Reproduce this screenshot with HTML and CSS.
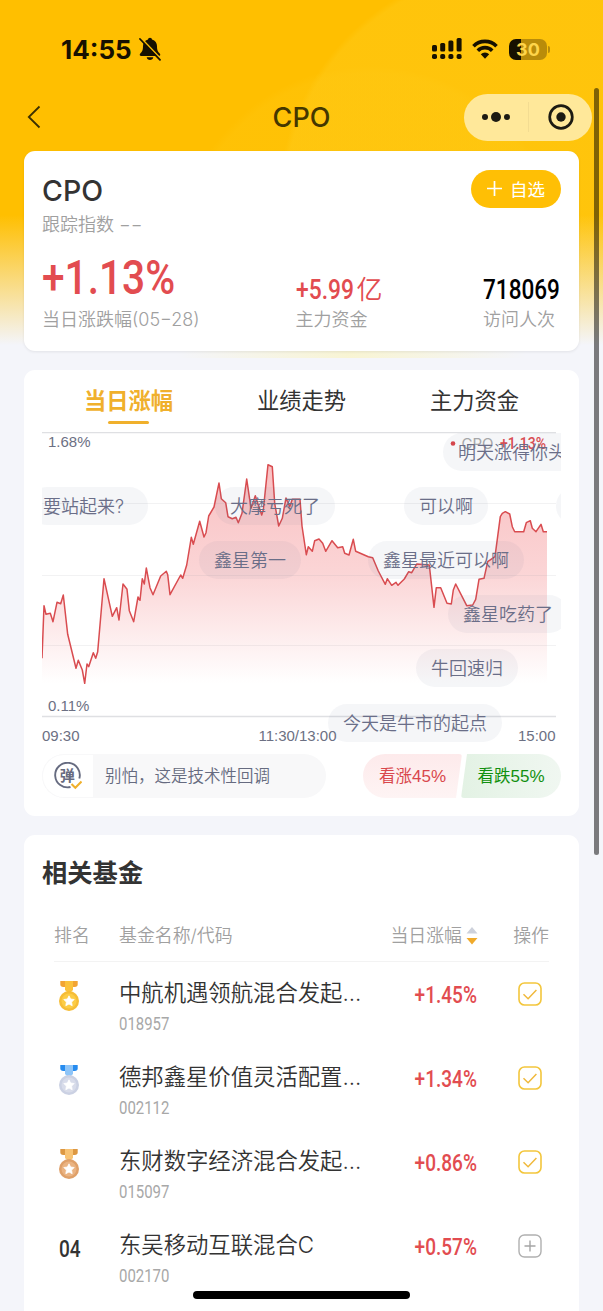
FILE: index.html
```html
<!DOCTYPE html>
<html lang="zh-CN">
<head>
    <meta charset="UTF-8">
    <meta name="viewport" content="width=device-width, initial-scale=1.0">
    <title>CPO</title>
    <link rel="stylesheet" href="styles.css">
</head>
<body>

    <svg width="0" height="0" class="defs">
        <symbol id="check" viewBox="0 0 24 24">
            <rect x="1" y="1" width="22" height="22" rx="5.5" fill="none" stroke="#f3c63c" stroke-width="1.6"/>
            <path d="M5.5 12.3l4.600 4.400 8.300-8.600" fill="none" stroke="#f0b93c" stroke-width="1.5"/>
        </symbol>
        <symbol id="plus" viewBox="0 0 24 24">
            <rect x="1" y="1" width="22" height="22" rx="5.5" fill="none" stroke="#b0b0b0" stroke-width="1.4"/>
            <path d="M6.5 12h11M12 6.5v11" fill="none" stroke="#a5a5a5" stroke-width="1.4"/>
        </symbol>
        <symbol id="star" viewBox="0 0 12 12">
            <path d="M6 .8l1.6 3.2 3.6.5-2.6 2.6.6 3.6L6 9l-3.200 1.700.6-3.600L.8 4.500l3.600-.5z" fill="#fff" stroke="#fff" stroke-width=".8" stroke-linejoin="round"/>
        </symbol>
    </svg>

    <header class="header">
        <div class="status-bar">
            <div class="status-left">
                <span class="time">14:55</span>
                <svg width="22" height="24" viewBox="0 0 22 24">
                    <path d="M11 .7c1.100 0 1.900.8 2 1.700 3.300.9 5 3.600 5 6.600 0 4.600 1 5.800 2.700 7.400 1.100 1.100.5 2.600-.9 2.600H2.200c-1.400 0-2-1.500-.9-2.600C3 14.800 4 13.600 4 9c0-3 1.700-5.700 5-6.600.1-.9.900-1.700 2-1.700zM7.700 20.300h6.600c-.3 1.700-1.600 2.700-3.300 2.700s-3-1-3.300-2.700z" fill="#171100"/>
                    <path d="M2.200 1.300l19.500 20.400" stroke="#ffc000" stroke-width="1.800"/>
                    <path d="M1 2l20 20.800" stroke="#171100" stroke-width="1.800" stroke-linecap="round"/>
                </svg>
            </div>
            <div class="status-right">
                <svg width="30" height="22" viewBox="0 0 30 22" fill="#171100">
                    <rect x="0" y="7" width="5" height="6.500" rx="1.500"/>
                    <rect x="8.200" y="5" width="5" height="8.500" rx="1.500"/>
                    <rect x="16.400" y="2.500" width="5" height="11" rx="1.500"/>
                    <rect x="24.600" y="0" width="5" height="13.500" rx="1.500"/>
                    <rect x="0" y="16" width="5" height="5" rx="1.800"/>
                    <rect x="8.200" y="16" width="5" height="5" rx="1.800"/>
                    <rect x="16.400" y="16" width="5" height="5" rx="1.800"/>
                    <rect x="24.600" y="16" width="5" height="5" rx="1.800"/>
                </svg>
                <svg class="wifi" width="26" height="20" viewBox="0 0 26 20">
                    <g fill="none" stroke="#171100" stroke-width="3.700">
                        <path d="M1.500 7.200a16.300 16.300 0 0 1 23 0"/>
                        <path d="M5.800 11.700a10.200 10.200 0 0 1 14.400 0"/>
                    </g>
                    <path d="M13 19.700l-4.200-4.400a6 6 0 0 1 8.400 0z" fill="#171100"/>
                </svg>
                <div class="battery"><span>30</span></div>
            </div>
        </div>
        <nav class="nav">
            <svg class="back" width="14" height="24" viewBox="0 0 14 24">
                <path d="M12.500 1.500L1.800 12l10.700 10.500" fill="none" stroke="#3c3000" stroke-width="1.800"/>
            </svg>
            <h1>CPO</h1>
            <div class="capsule">
                <svg width="30" height="12" viewBox="0 0 30 12" fill="#1c1a12">
                    <circle cx="4" cy="6" r="3"/><circle cx="15" cy="6" r="5"/><circle cx="26" cy="6" r="3"/>
                </svg>
                <i></i>
                <svg width="26" height="26" viewBox="0 0 26 26">
                    <circle cx="13" cy="13" r="11.300" fill="none" stroke="#1c1a12" stroke-width="2.700"/>
                    <circle cx="13" cy="13" r="4.700" fill="#1c1a12"/>
                </svg>
            </div>
        </nav>
    </header>

    <main>
        <section class="card summary">
            <div class="summary-top">
                <div>
                    <h2>CPO</h2>
                    <p class="label">跟踪指数 <span class="dash">−−</span></p>
                </div>
                <button class="add">
                    <svg width="15" height="15" viewBox="0 0 15 15"><path d="M7.500 0v15M0 7.500h15" stroke="#fff" stroke-width="1.700"/></svg>
                    自选
                </button>
            </div>
            <div class="stats">
                <div class="stat stat-main">
                    <div class="value up"><span class="din">+1.13%</span></div>
                    <p class="label">当日涨跌幅(05−28)</p>
                </div>
                <div class="stat stat-fund">
                    <div class="value up"><span class="din">+5.99</span><span class="unit">亿</span></div>
                    <p class="label">主力资金</p>
                </div>
                <div class="stat stat-visit">
                    <div class="value"><span class="din">718069</span></div>
                    <p class="label">访问人次</p>
                </div>
            </div>
        </section>

        <section class="card trend">
            <div class="tabs">
                <div class="tab active">当日涨幅</div>
                <div class="tab">业绩走势</div>
                <div class="tab">主力资金</div>
            </div>
            <div class="chart">
                <svg width="519" height="313" viewBox="42 432 519 313">
                    <defs>
                        <linearGradient id="fade" gradientUnits="userSpaceOnUse" x1="0" y1="465" x2="0" y2="683">
                            <stop offset="0" stop-color="#f9c0c2"/>
                            <stop offset=".5" stop-color="#fbd5d6"/>
                            <stop offset="1" stop-color="#ffffff"/>
                        </linearGradient>
                    </defs>
                    <path fill="url(#fade)" d="M42 658.300L44 605.700 46 614.300 50.300 613.300 53 621.700 57 602.300 60.700 603.700 63.300 595 67.700 634.300 76 668.300 78.300 660.300 82.300 670 84.700 683.300 87 664 88.700 666.700 93.300 652.700 95.700 658.300 97.700 651.700 104 578.700 112.300 616.300 116.700 607.700 119 620 123 584 127 589.300 129.300 610.700 133.700 621.700 138 597 140 600.300 142.300 578.700 144.300 584 146.300 568 150 587.700 153 594.700 160.700 576 166.300 571.300 167.700 574.700 170 594.700 180.700 575 182.700 578.300 186.700 565 191.300 537.300 193.300 544.300 199.700 521.300 204 537 206 532.700 208.700 516 214 507 219 483 221.300 498.700 225.700 502.700 228 516.700 232.300 518.700 236 517.300 238.300 522.700 242 513.300 246.700 479 251 508.300 255.300 495.700 261.700 515 263.300 510 268 464.700 272.300 466.700 274.700 503.300 278.700 526 282.300 518.300 286 498 289.700 506.700 292.300 499.300 300 499.300 302 526 306.300 554.700 308.300 546.700 312.300 551.300 314.700 540.700 319 539 322.700 543.300 325.700 551.300 332 540.700 337.700 547.700 342.700 546.700 344.700 553.300 349 555 353.300 539.300 355.700 551.300 368.300 556.700 372.700 557.700 378.300 571 385.300 584.300 387.300 578.700 391.700 585.300 396 582.300 398 585.300 404.300 579 408.700 571.700 411.700 572.700 416.700 564 429.300 565 431.700 586.700 434 607.300 436.300 587.700 440.700 587.700 447 603.300 451.300 604 453.300 590 455.700 584 466.700 605.700 472.700 605 475.700 599.300 479 579.300 484 578.300 487.700 561.700 495 556.700 500.300 516.700 502.300 513.300 505.300 511.700 509.700 514 512.300 526.700 514.700 531.700 523.700 531.700 526.300 522.700 530.300 520.700 532.300 528.300 536 531.700 541 524.300 543.300 531.700 547 531.700V690H42z"/>
                    <g stroke="#9a9aa5" stroke-opacity=".13">
                        <path d="M42 503.500H556M42 575.500H556M42 645.500H556"/>
                    </g>
                    <path d="M42 432.500H556M42 716.500H556" stroke="#dfe0e3" stroke-width="1.500"/>
                    <path fill="none" stroke="#d94c50" stroke-width="1.500" stroke-linejoin="round" d="M42 658.300L44 605.700 46 614.300 50.300 613.300 53 621.700 57 602.300 60.700 603.700 63.300 595 67.700 634.300 76 668.300 78.300 660.300 82.300 670 84.700 683.300 87 664 88.700 666.700 93.300 652.700 95.700 658.300 97.700 651.700 104 578.700 112.300 616.300 116.700 607.700 119 620 123 584 127 589.300 129.300 610.700 133.700 621.700 138 597 140 600.300 142.300 578.700 144.300 584 146.300 568 150 587.700 153 594.700 160.700 576 166.300 571.300 167.700 574.700 170 594.700 180.700 575 182.700 578.300 186.700 565 191.300 537.300 193.300 544.300 199.700 521.300 204 537 206 532.700 208.700 516 214 507 219 483 221.300 498.700 225.700 502.700 228 516.700 232.300 518.700 236 517.300 238.300 522.700 242 513.300 246.700 479 251 508.300 255.300 495.700 261.700 515 263.300 510 268 464.700 272.300 466.700 274.700 503.300 278.700 526 282.300 518.300 286 498 289.700 506.700 292.300 499.300 300 499.300 302 526 306.300 554.700 308.300 546.700 312.300 551.300 314.700 540.700 319 539 322.700 543.300 325.700 551.300 332 540.700 337.700 547.700 342.700 546.700 344.700 553.300 349 555 353.300 539.300 355.700 551.300 368.300 556.700 372.700 557.700 378.300 571 385.300 584.300 387.300 578.700 391.700 585.300 396 582.300 398 585.300 404.300 579 408.700 571.700 411.700 572.700 416.700 564 429.300 565 431.700 586.700 434 607.300 436.300 587.700 440.700 587.700 447 603.300 451.300 604 453.300 590 455.700 584 466.700 605.700 472.700 605 475.700 599.300 479 579.300 484 578.300 487.700 561.700 495 556.700 500.300 516.700 502.300 513.300 505.300 511.700 509.700 514 512.300 526.700 514.700 531.700 523.700 531.700 526.300 522.700 530.300 520.700 532.300 528.300 536 531.700 541 524.300 543.300 531.700 547 531.700"/>
                    <g class="axis">
                        <text x="48" y="447">1.68%</text>
                        <text x="48" y="711">0.11%</text>
                        <text x="42" y="741">09:30</text>
                        <text x="297.500" y="741" text-anchor="middle">11:30/13:00</text>
                        <text x="555.500" y="741" text-anchor="end">15:00</text>
                    </g>
                    <circle cx="453" cy="443.500" r="2.300" fill="#dd4449"/>
                    <text x="461.500" y="449" class="legend-name">CPO</text>
                    <text x="500" y="449" class="legend-value" textLength="46" lengthAdjust="spacingAndGlyphs">+1.13%</text>
                </svg>
                <!-- floating comments over the chart -->
                <div class="danmaku">
                    <span class="dm dm-1">明天涨得你头</span>
                    <span class="dm dm-2">要站起来?</span>
                    <span class="dm dm-3">大摩亏死了</span>
                    <span class="dm dm-4">可以啊</span>
                    <span class="dm dm-5"></span>
                    <span class="dm dm-6">鑫星第一</span>
                    <span class="dm dm-7">鑫星最近可以啊</span>
                    <span class="dm dm-8">鑫星吃药了</span>
                    <span class="dm dm-9">牛回速归</span>
                    <span class="dm dm-10">今天是牛市的起点</span>
                </div>
            </div>
            <div class="talk">
                <div class="talk-input">
                    <div class="talk-icon">
                        <svg width="28" height="28" viewBox="0 0 28 28">
                            <path d="M25.300 16.500A12.300 12.300 0 1 0 16.500 25" fill="none" stroke="#666b80" stroke-width="1.900"/>
                            <text x="13.300" y="18.500" text-anchor="middle">弹</text>
                            <path d="M17.500 22l3.800 3.800 6.200-6.300" fill="none" stroke="#f0b02c" stroke-width="2"/>
                        </svg>
                    </div>
                    <span>别怕，这是技术性回调</span>
                </div>
                <div class="vote">
                    <div class="vote-up">看涨<span>45%</span></div>
                    <div class="vote-down">看跌<span>55%</span></div>
                </div>
            </div>
        </section>

        <section class="card funds">
            <h3>相关基金</h3>
            <div class="table">
                <div class="row head">
                    <div>排名</div>
                    <div>基金名称/代码</div>
                    <div class="sort">当日涨幅
                        <svg width="12" height="18" viewBox="0 0 12 18"><path d="M6 0l5.500 6.500H.5z" fill="#cdd1db"/><path d="M6 17.500L.5 11h11z" fill="#f0aa2a"/></svg>
                    </div>
                    <div class="action">操作</div>
                </div>
                <div class="row">
                    <div class="rank">
                        <svg width="20" height="31" viewBox="0 0 20 31">
                            <path d="M1.300 0h17.400v3.600q0 2.400-3 2.400H4.300q-3 0-3-2.400z" fill="#f2a434"/>
                            <path d="M6 0h8v9l-2 2H8L6 9z" fill="#fbc23c"/>
                            <circle cx="10" cy="20" r="10" fill="#f6bd36"/><circle cx="10" cy="20" r="7.500" fill="#fccc45"/>
                            <use href="#star" x="4" y="14" width="12" height="12"/>
                        </svg>
                    </div>
                    <div class="fund"><p class="name">中航机遇领航混合发起...</p><p class="code"><span class="din">018957</span></p></div>
                    <div class="rate"><span class="din">+1.45%</span></div>
                    <div class="action"><svg width="24" height="24"><use href="#check"/></svg></div>
                </div>
                <div class="row">
                    <div class="rank">
                        <svg width="20" height="31" viewBox="0 0 20 31">
                            <path d="M1.300 0h17.400v3.600q0 2.400-3 2.400H4.300q-3 0-3-2.400z" fill="#268bef"/>
                            <path d="M6 0h8v9l-2 2H8L6 9z" fill="#8fc5f8"/>
                            <circle cx="10" cy="20" r="10" fill="#cbd1e3"/><circle cx="10" cy="20" r="7.500" fill="#d8dcea"/>
                            <use href="#star" x="4" y="14" width="12" height="12"/>
                        </svg>
                    </div>
                    <div class="fund"><p class="name">德邦鑫星价值灵活配置...</p><p class="code"><span class="din">002112</span></p></div>
                    <div class="rate"><span class="din">+1.34%</span></div>
                    <div class="action"><svg width="24" height="24"><use href="#check"/></svg></div>
                </div>
                <div class="row">
                    <div class="rank">
                        <svg width="20" height="31" viewBox="0 0 20 31">
                            <path d="M1.300 0h17.400v3.600q0 2.400-3 2.400H4.300q-3 0-3-2.400z" fill="#dd9842"/>
                            <path d="M6 0h8v9l-2 2H8L6 9z" fill="#f8c374"/>
                            <circle cx="10" cy="20" r="10" fill="#dfa069"/><circle cx="10" cy="20" r="7.500" fill="#eab382"/>
                            <use href="#star" x="4" y="14" width="12" height="12"/>
                        </svg>
                    </div>
                    <div class="fund"><p class="name">东财数字经济混合发起...</p><p class="code"><span class="din">015097</span></p></div>
                    <div class="rate"><span class="din">+0.86%</span></div>
                    <div class="action"><svg width="24" height="24"><use href="#check"/></svg></div>
                </div>
                <div class="row">
                    <div class="rank"><span class="din">04</span></div>
                    <div class="fund"><p class="name">东吴移动互联混合C</p><p class="code"><span class="din">002170</span></p></div>
                    <div class="rate"><span class="din">+0.57%</span></div>
                    <div class="action"><svg width="24" height="24"><use href="#plus"/></svg></div>
                </div>
            </div>
        </section>
    </main>

    <div class="scrollbar"></div>
    <div class="home-bar"></div>

</body>
</html>
```

FILE: styles.css
```css
* {
    box-sizing: border-box;
}

body {
    position: relative;
    height: 1311px;
    margin: 0;
    overflow: hidden;
    font-family: Inter, 'Noto Sans CJK SC', sans-serif;
    color: #333;
    background:
        linear-gradient(90deg, rgba(250, 245, 200, 0), rgba(250, 244, 195, .7) 50%, rgba(250, 245, 200, 0)) 176px 345px / 350px 13px no-repeat,
        linear-gradient(rgba(244, 245, 250, 0) 215px, #f4f5fa 345px) 0 0 / 100% 345px no-repeat,
        radial-gradient(circle at 518px 205px, rgba(255, 205, 30, .38) 234px, transparent 240px) 0 0 / 100% 345px no-repeat,
        radial-gradient(circle at 370px 260px, rgba(255, 200, 18, .3) 186px, transparent 194px) 0 0 / 100% 345px no-repeat,
        linear-gradient(#ffbf00, #ffbf00) 0 0 / 100% 345px no-repeat,
        #f4f5fa;
}

h1, h2, h3, p {
    margin: 0;
}

svg {
    display: block;
    flex-shrink: 0;
}

.defs {
    position: absolute;
}

/* narrow numerals */
.din {
    display: inline-block;
    font-family: Roboto, sans-serif;
    transform: scaleX(.83);
    transform-origin: left center;
}

/* Header */
.header {
    height: 151px;
}

.status-bar {
    display: flex;
    justify-content: space-between;
    align-items: center;
    height: 83px;
    padding: 15px 56px 0 61px;
}

.status-left,
.status-right {
    display: flex;
    align-items: center;
}

.time {
    width: 78px;
    font-size: 26px;
    font-weight: 700;
    color: #171100;
}

.wifi {
    margin: 0 11px 0 10px;
}

.battery {
    position: relative;
    width: 38px;
    height: 21px;
    border-radius: 7px;
    background: linear-gradient(90deg, #171100 12px, #b98c0a 12px);
    color: #ffd54a;
    font-size: 18px;
    font-weight: 700;
    line-height: 21px;
    text-align: center;
}

.battery::after {
    content: "";
    position: absolute;
    left: 39px;
    top: 7px;
    width: 2px;
    height: 7px;
    border-radius: 0 2px 2px 0;
    background: #b98c0a;
}

.nav {
    display: grid;
    grid-template-columns: 1fr auto 1fr;
    align-items: center;
    height: 68px;
    padding: 0 11px;
}

.back {
    margin-left: 16px;
}

.nav h1 {
    font-size: 27px;
    font-weight: 500;
    color: #443700;
}

.capsule {
    display: flex;
    align-items: center;
    justify-self: end;
    width: 128px;
    height: 47px;
    padding: 0 18px 0 17px;
    border-radius: 24px;
    background: #ffe89a;
}

.capsule i {
    width: 1px;
    height: 30px;
    margin: 0 19px 0 17px;
    background: #f3dc92;
}

/* Cards */
main {
    display: flex;
    flex-direction: column;
    gap: 19px;
    padding: 0 24px;
}

.card {
    border-radius: 11px;
    background: #fff;
}

.label {
    font-size: 18px;
    line-height: 24px;
    font-weight: 350;
    color: #a0a0a0;
}

.up {
    color: #e24c50;
}

.summary {
    height: 200px;
    padding: 19px 18px 0;
    box-shadow: 0 1px 3px rgba(0, 0, 0, .08);
}

.summary-top {
    display: flex;
    justify-content: space-between;
    height: 74px;
}

.summary h2 {
    font-size: 28.5px;
    line-height: 41px;
    font-weight: 500;
}

.summary-top .label {
    margin-top: 2px;
}

.add {
    display: flex;
    align-items: center;
    justify-content: center;
    gap: 8px;
    width: 90px;
    height: 38px;
    padding: 0 0 1px;
    border: 0;
    border-radius: 19px;
    background: #ffbf05;
    color: #fff;
    font: 400 17.5px 'Noto Sans CJK SC', sans-serif;
}

.stats {
    display: grid;
    grid-template-columns: 253.5px 187.5px 1fr;
}

.value {
    display: flex;
    align-items: flex-end;
    height: 64px;
    white-space: nowrap;
    font-size: 27.5px;
    font-weight: 500;
    line-height: 37px;
}

.stat-main .value {
    font-size: 49px;
    line-height: 60px;
}

.stat-fund .din {
    width: 61px;
}

.unit {
    font-size: 26px;
    font-weight: 350;
}

.stat-visit .value {
    color: #000;
}

.stat-visit .din {
    transform: scaleX(.82);
}

/* Trend */
.trend {
    height: 446px;
    padding: 0 18px;
}

.tabs {
    display: grid;
    grid-template-columns: repeat(3, 1fr);
    height: 62px;
}

.tab {
    position: relative;
    line-height: 61px;
    font-size: 22.3px;
    text-align: center;
}

.active {
    font-weight: 700;
    color: #f0b02c;
}

.active::after {
    content: "";
    position: absolute;
    left: 50%;
    bottom: 8px;
    width: 41px;
    height: 3px;
    margin-left: -20.5px;
    border-radius: 2px;
    background: #f0b02c;
}

.chart {
    position: relative;
    height: 322px;
}

.axis text {
    font: 15px 'Liberation Sans', sans-serif;
    fill: #6c7083;
}

.legend-name {
    font-size: 15px;
    fill: #aaa;
}

.legend-value {
    font: 500 17px Roboto, sans-serif;
    fill: #e24c50;
}

.danmaku {
    position: absolute;
    inset: 0;
    overflow: hidden;
}

.dm {
    position: absolute;
    height: 38px;
    padding: 0 15px;
    border-radius: 19px;
    background: rgba(80, 95, 130, .06);
    color: #6a6e88;
    font-size: 18px;
    font-weight: 350;
    line-height: 39px;
    white-space: nowrap;
}

.dm-1 { left: 401px; top: 1px; }
.dm-2 { left: -14px; top: 55px; width: 120px; }
.dm-3 { left: 173px; top: 55px; }
.dm-4 { left: 362px; top: 55px; }
.dm-5 { left: 514px; top: 55px; width: 60px; }
.dm-6 { left: 157px; top: 109px; }
.dm-7 { left: 326px; top: 109px; }
.dm-8 { left: 406px; top: 163px; }
.dm-9 { left: 374px; top: 217px; }
.dm-10 { left: 286px; top: 272px; }

.talk {
    display: flex;
    justify-content: space-between;
    height: 44px;
    font-size: 16.5px;
    line-height: 45px;
}

.talk-input {
    display: flex;
    width: 284px;
    border-radius: 22px;
    overflow: hidden;
    background: #f8f8f9;
    color: #666b80;
    font-weight: 350;
}

.talk-icon {
    display: flex;
    align-items: center;
    width: 51px;
    margin-right: 12px;
    padding-left: 11px;
    border: 1px solid #f8f8f9;
    border-right: 0;
    border-radius: 22px 0 0 22px;
    background: #fff;
}

.talk-icon text {
    font-size: 15px;
    font-weight: 700;
    fill: #666b80;
}

.vote {
    display: flex;
    width: 198px;
    text-align: center;
}

.vote span {
    font-family: 'Liberation Sans', sans-serif;
    font-size: 17px;
}

.vote-up {
    width: 99px;
    border-radius: 22px 3px 3px 22px;
    background: linear-gradient(#fdeaeb, #fef4f4);
    color: #d9474c;
    clip-path: polygon(0 0, 100% 0, 93px 100%, 0 100%);
}

.vote-down {
    width: 100px;
    margin-left: -1px;
    border-radius: 3px 22px 22px 3px;
    background: linear-gradient(90deg, #e3f2e4, #f0f7f1);
    color: #12900f;
    clip-path: polygon(6px 0, 100% 0, 100% 100%, 0 100%);
}

/* Funds */
.funds {
    height: 500px;
    padding: 19px 30px 0;
}

.funds h3 {
    height: 55px;
    margin-left: -12px;
    font-size: 25.3px;
    line-height: 38px;
    font-weight: 700;
}

.row {
    display: grid;
    grid-template-columns: 65px 1fr 110px 71px;
    height: 84px;
}

.head {
    height: 53px;
    border-bottom: 1px solid #f3f3f3;
    font-size: 17.9px;
    font-weight: 350;
    line-height: 54px;
    color: #a0a0a0;
}

.sort {
    display: flex;
    align-items: center;
    justify-content: flex-end;
    gap: 4px;
    white-space: nowrap;
}

.rank {
    padding: 19px 0 0 5px;
    font-size: 23px;
    font-weight: 500;
}

.rank .din {
    margin-top: -1px;
    line-height: 36px;
}

.name {
    padding-top: 13px;
    font-size: 22.4px;
    font-weight: 350;
    line-height: 36px;
    white-space: nowrap;
    letter-spacing: -.05px;
}

.code {
    font-size: 18px;
    line-height: 25px;
    color: #a8a8a8;
}

.rate {
    padding-top: 16px;
    text-align: right;
    font-size: 23.5px;
    font-weight: 500;
    line-height: 33px;
    color: #e24c50;
}

.rate .din {
    transform: scaleX(.81);
    transform-origin: right center;
    margin-right: 1px;
}

.action {
    display: flex;
    justify-content: flex-end;
}

.row:not(.head) .action {
    padding: 20px 7px 0 0;
}

.scrollbar {
    position: absolute;
    right: 4px;
    top: 88px;
    width: 5px;
    height: 767px;
    border-radius: 3px;
    background: rgba(0, 0, 0, .5);
}

.home-bar {
    position: absolute;
    left: 193px;
    bottom: 12px;
    width: 217px;
    height: 8px;
    border-radius: 4px;
    background: #000;
}
```
